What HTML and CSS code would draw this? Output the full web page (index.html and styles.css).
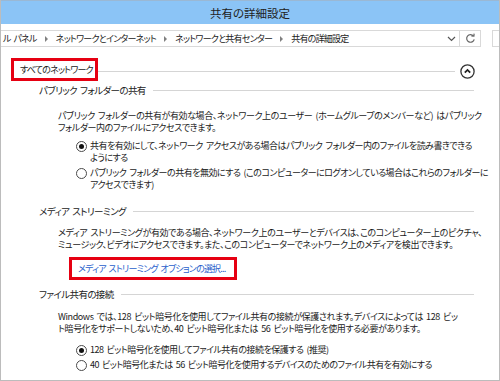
FILE: index.html
```html
<!DOCTYPE html>
<html>
  <head>
    <title>共有の詳細設定</title>
    <link rel="stylesheet" href="styles.css">
  </head>
  <body>
    <div class="window">
      <div class="titlebar">共有の詳細設定</div>

      <div class="toolbar">
        <div class="address">
          <span class="crumb">ル パネル</span>
          <span class="sep"></span>
          <span class="crumb">ネットワークとインターネット</span>
          <span class="sep"></span>
          <span class="crumb">ネットワークと共有センター</span>
          <span class="sep"></span>
          <span class="crumb">共有の詳細設定</span>
          <span class="drop">
            <svg width="9" height="6" viewBox="0 0 9 6"><polyline points="1,1 4.5,4.5 8,1" fill="none" stroke="#555" stroke-width="1.2"/></svg>
          </span>
        </div>
        <div class="refresh">
          <svg width="11" height="11" viewBox="0 0 11 11"><path d="M8.4 3A3.8 3.8 0 1 0 9.2 6.3" fill="none" stroke="#666" stroke-width="1.2"/><polyline points="6.3,2.9 8.9,3.2 9.1,0.6" fill="none" stroke="#666" stroke-width="1.2"/></svg>
        </div>
        <div class="search"></div>
      </div>

      <div class="content">
        <div class="group-head">
          <span class="group-title mark">すべてのネットワーク</span>
          <span class="rule"></span>
          <span class="collapse">
            <svg width="15" height="15" viewBox="0 0 15 15"><circle cx="7.5" cy="7.5" r="6.6" fill="#fff" stroke="#333" stroke-width="1.3"/><polyline points="4.8,8.6 7.5,5.9 10.2,8.6" fill="none" stroke="#222" stroke-width="1.8"/></svg>
          </span>
        </div>

        <div class="section">
          <div class="section-head"><span>パブリック フォルダーの共有</span><span class="rule"></span></div>
          <p class="desc">パブリック フォルダーの共有が有効な場合、ネットワーク上のユーザー (ホームグループのメンバーなど) はパブリック<br>フォルダー内のファイルにアクセスできます。</p>
          <ul class="options">
            <li><span class="radio checked"></span><span>共有を有効にして、ネットワーク アクセスがある場合はパブリック フォルダー内のファイルを読み書きできる<br>ようにする</span></li>
            <li><span class="radio"></span><span>パブリック フォルダーの共有を無効にする (このコンピューターにログオンしている場合はこれらのフォルダーに<br>アクセスできます)</span></li>
          </ul>
        </div>

        <div class="section media">
          <div class="section-head"><span>メディア ストリーミング</span><span class="rule"></span></div>
          <p class="desc">メディア ストリーミングが有効である場合、ネットワーク上のユーザーとデバイスは、このコンピューター上のピクチャ、<br>ミュージック、ビデオにアクセスできます。また、このコンピューターでネットワーク上のメディアを検出できます。</p>
          <div class="link-row"><a class="link mark" href="#">メディア ストリーミング オプションの選択...</a></div>
        </div>

        <div class="section files">
          <div class="section-head"><span>ファイル共有の接続</span><span class="rule"></span></div>
          <p class="desc">Windows では、128 ビット暗号化を使用してファイル共有の接続が保護されます。デバイスによっては 128 ビッ<br>ト暗号化をサポートしないため、40 ビット暗号化または 56 ビット暗号化を使用する必要があります。</p>
          <ul class="options">
            <li><span class="radio checked"></span><span>128 ビット暗号化を使用してファイル共有の接続を保護する (推奨)</span></li>
            <li><span class="radio"></span><span>40 ビット暗号化または 56 ビット暗号化を使用するデバイスのためのファイル共有を有効にする</span></li>
          </ul>
        </div>
      </div>
    </div>
  </body>
</html>
```

FILE: styles.css
```css
/* Window frame */
html, body {
  margin: 0;
  padding: 0;
  background: #fff;
}

body {
  font-family: "Noto Sans CJK JP", sans-serif;
  font-feature-settings: "palt";
  font-size: 9px;
  letter-spacing: -0.4px;
  word-spacing: 1.5px;
  line-height: 12px;
  color: #1a1a1a;
}

.window {
  width: 500px;
  height: 381px;
  box-sizing: border-box;
  border: 1px solid #bcbcbc;
  border-top: none;
  overflow: hidden;
}

.titlebar {
  height: 24px;
  background-color: #8bc4f6;
  border-top: 1px solid #9ab8d4;
  box-sizing: border-box;
  display: flex;
  align-items: center;
  justify-content: center;
  font-size: 11.5px;
  letter-spacing: 0;
  color: #222;
}

/* Address bar */
.toolbar {
  display: flex;
  height: 23px;
  padding-top: 6px;
  box-sizing: border-box;
}

.address {
  display: flex;
  align-items: center;
  width: 458px;
  height: 17px;
  box-sizing: border-box;
  border: 1px solid #d9d9d9;
  border-left: none;
  border-right: none;
  padding-left: 2px;
  letter-spacing: -0.75px;
  color: #222;
}

.sep {
  width: 0;
  height: 0;
  border-left: 3px solid #808080;
  border-top: 3px solid transparent;
  border-bottom: 3px solid transparent;
  margin: 0 8px 0 8px;
}

.drop {
  margin-left: auto;
  width: 16px;
  display: flex;
  justify-content: center;
}

.refresh {
  width: 22px;
  height: 17px;
  box-sizing: border-box;
  border: 1px solid #d9d9d9;
  display: flex;
  align-items: center;
  justify-content: center;
}

.search {
  margin-left: 11px;
  flex: 1;
  height: 17px;
  box-sizing: border-box;
  border: 1px solid #d9d9d9;
  border-right: none;
}

/* Content */
.content {
  padding: 11px 0 0 10px;
}

.group-head {
  display: flex;
  align-items: center;
  height: 23px;
}

.mark {
  border: 3px solid #e60012;
}

.group-title {
  height: 23px;
  box-sizing: border-box;
  display: flex;
  align-items: center;
  padding: 0 2px 0 6px;
  letter-spacing: -0.8px;
  color: #222;
}

.rule {
  flex: 1;
  height: 1px;
  background-color: #d5d5d5;
}

.group-head .rule {
  margin-top: 4px;
}

.collapse {
  display: flex;
  margin: 3px 24px 0 5px;
}

.section {
  padding-left: 28px;
}

.section-head {
  display: flex;
  align-items: center;
  margin-top: 3px;
  height: 12px;
  font-size: 9.5px;
  letter-spacing: -0.6px;
  color: #222;
}

.section-head .rule {
  margin-left: 7px;
  margin-right: 25px;
}

.desc {
  margin: 14px 0 0 19px;
  white-space: nowrap;
}

.options {
  list-style: none;
  margin: 6px 0 0 37px;
  padding: 0;
}

.options li {
  display: flex;
  align-items: flex-start;
  white-space: nowrap;
  margin-bottom: 3px;
  letter-spacing: -0.5px;
}

.radio {
  width: 11px;
  height: 11px;
  box-sizing: border-box;
  border: 1px solid #4a4a4a;
  border-radius: 50%;
  margin: 1px 3px 0 0;
  display: flex;
  align-items: center;
  justify-content: center;
  flex-shrink: 0;
}

.radio.checked::after {
  content: "";
  width: 5px;
  height: 5px;
  border-radius: 50%;
  background-color: #111;
}

.media {
  margin-top: 14px;
}

.media .desc {
  margin-top: 10px;
}

.link-row {
  margin: 6px 0 0 30px;
}

.link {
  display: inline-block;
  height: 23px;
  box-sizing: border-box;
  padding: 0 9px 0 6px;
  line-height: 17px;
  letter-spacing: -0.8px;
  color: #2a5fcc;
  text-decoration: none;
}

.files {
  margin-top: 8px;
}

.files .desc {
  margin-top: 11px;
}

.files .options {
  margin-top: 9px;
}
```
